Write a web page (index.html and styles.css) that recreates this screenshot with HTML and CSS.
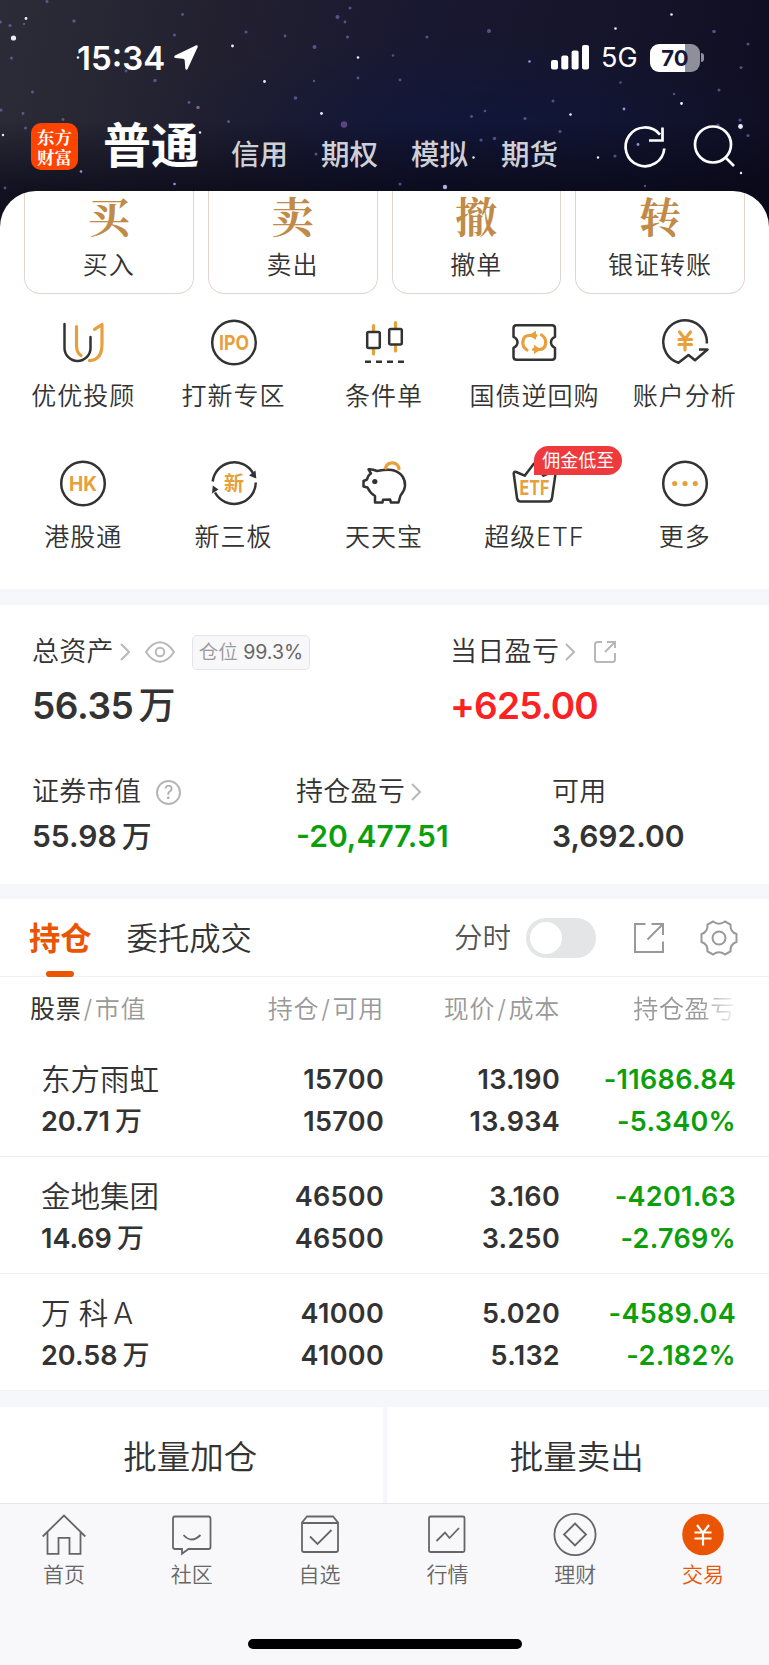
FILE: index.html
```html
<!DOCTYPE html>
<html lang="zh-CN">
<head>
  <meta charset="UTF-8" />
  <meta name="viewport" content="width=device-width, initial-scale=1.0"/>
  <title>东方财富 - 交易</title>
  <link rel="stylesheet" href="styles.css">
</head>
<body>
  <header class="top">
    <svg class="stars" viewBox="0 0 769 240" fill="#7d78c8">
      <g fill="#e8ecff">
        <circle cx="13.5" cy="38" r="2.6"/><circle cx="26" cy="18.5" r="1.4"/><circle cx="3" cy="135" r="1.2"/>
        <circle cx="78" cy="57.5" r="1.3"/><circle cx="232.5" cy="46" r="1.4"/><circle cx="264.5" cy="81.5" r="1.4"/>
        <circle cx="358" cy="57.5" r="1.3"/><circle cx="321.5" cy="113.5" r="1.4"/><circle cx="200" cy="132.5" r="1.2"/>
        <circle cx="671.5" cy="14.5" r="1.3"/><circle cx="615.5" cy="28.5" r="1.3"/><circle cx="681.5" cy="103.5" r="1.4"/>
        <circle cx="740.5" cy="126.5" r="2.4"/><circle cx="598" cy="157.5" r="1.2"/><circle cx="473.5" cy="157.5" r="1.2"/>
        <circle cx="741" cy="173" r="1.2"/><circle cx="445" cy="187" r="2.2" fill="#a9b4dd"/><circle cx="570.5" cy="114.5" r="1.3"/>
      </g>
      <g fill="#8f95dd">
        <circle cx="81" cy="171.5" r="1.3"/><circle cx="174.5" cy="184" r="1.3"/><circle cx="529.5" cy="61.5" r="1.3"/>
        <circle cx="624" cy="109" r="1.4"/><circle cx="638" cy="144.5" r="1.4"/><circle cx="518" cy="148" r="2"/>
        <circle cx="276" cy="153" r="2"/>
      </g>
      <g opacity=".6">
        <circle cx="74" cy="21" r="1.7"/><circle cx="10" cy="25.5" r="1.6"/><circle cx="24" cy="24" r="1.2"/>
        <circle cx="0.5" cy="22" r="1.5"/><circle cx="47" cy="1.5" r="1.5"/><circle cx="11.5" cy="58" r="1.5"/>
        <circle cx="174.5" cy="35" r="1.5"/><circle cx="182.5" cy="14.5" r="1.4"/><circle cx="246" cy="32" r="1.5"/>
        <circle cx="285" cy="36" r="1.4"/><circle cx="314.5" cy="47" r="2"/><circle cx="337.5" cy="17" r="2"/>
        <circle cx="345" cy="22" r="1.4"/><circle cx="347.5" cy="37" r="1.5"/><circle cx="350" cy="8" r="1.5"/>
        <circle cx="155" cy="80.5" r="1.7"/><circle cx="126" cy="71" r="1.4"/><circle cx="32.5" cy="92" r="1.5"/>
        <circle cx="295.5" cy="98" r="1.8"/><circle cx="314" cy="81" r="1.2"/><circle cx="358" cy="78" r="1.4"/>
        <circle cx="189" cy="102.5" r="1.4"/><circle cx="198" cy="107.5" r="1.8" fill="#b48ac4"/><circle cx="344" cy="124.5" r="3.2" fill="#8b62b8"/>
        <circle cx="228.5" cy="121.5" r="1.5"/><circle cx="1" cy="110" r="1.5"/><circle cx="23" cy="113.5" r="1.4"/>
        <circle cx="63" cy="119.5" r="1.4"/><circle cx="25.5" cy="128" r="1.5"/><circle cx="316" cy="154" r="1.5"/>
        <circle cx="489" cy="31" r="2"/><circle cx="427" cy="37" r="1.5"/><circle cx="714" cy="31.5" r="1.8"/>
        <circle cx="748" cy="44" r="1.5"/><circle cx="741" cy="67.5" r="1.5"/><circle cx="719" cy="90" r="1.5"/>
        <circle cx="674" cy="94" r="1.2"/><circle cx="553" cy="101" r="1.5"/><circle cx="560" cy="131.5" r="1.6"/>
        <circle cx="525" cy="118.5" r="1.6"/><circle cx="485" cy="111" r="1.3"/><circle cx="471.5" cy="116.5" r="1.4"/>
        <circle cx="481" cy="140" r="1.6"/><circle cx="494.5" cy="138.5" r="1.7"/><circle cx="740" cy="120" r="1.6"/>
        <circle cx="748" cy="135.5" r="1.6"/><circle cx="718" cy="125" r="1.6"/><circle cx="615" cy="156" r="1.6"/>
        <circle cx="400" cy="80" r="1.4"/><circle cx="620.5" cy="82.5" r="1.3"/><circle cx="400" cy="184" r="1.5"/>
        <circle cx="645" cy="186" r="1.2"/><circle cx="5" cy="188" r="1.4"/><circle cx="393" cy="55.5" r="1.2"/>
      </g>
    </svg>

    <div class="status">
      <span class="time">15:34</span>
      <svg class="locate" width="27" height="27" viewBox="0 0 27 27"><path d="M24.3 1.3 3 11.5q-2 1.6.5 2.6l7.5.7q1.6.2 1.7 1.8l.6 8q.8 2.2 2.3.3L25.700 3q.4-2.200-1.400-1.700z" fill="#fff"/></svg>
      <svg class="signal" width="38" height="25" viewBox="0 0 38 25" fill="#fff">
        <rect x="0" y="15" width="7" height="9.5" rx="2"/><rect x="10.3" y="10.5" width="7" height="14" rx="2"/>
        <rect x="20.6" y="5.5" width="7" height="19" rx="2"/><rect x="31" y="0" width="7" height="24.5" rx="2"/>
      </svg>
      <span class="net">5G</span>
      <span class="battery">70</span>
      <span class="battery-tip"></span>
    </div>

    <nav class="nav">
      <div class="logo">东方<br>财富</div>
      <a class="nav-on">普通</a>
      <a>信用</a>
      <a>期权</a>
      <a>模拟</a>
      <a>期货</a>
      <svg class="nav-refresh" width="46" height="46" viewBox="0 0 46 46" fill="none" stroke="#fff" stroke-width="2.7"><path d="M42.3 24.5A19.4 19.4 0 1 1 38 10.6"/><path d="M40.5 3.5v13H27"/></svg>
      <svg class="nav-search" width="46" height="46" viewBox="0 0 46 46" fill="none" stroke="#fff" stroke-width="2.7"><circle cx="22" cy="20.5" r="18"/><path d="m34.5 33.5 8.5 8.5"/></svg>
    </nav>
  </header>

  <section class="panel">
    <div class="cards">
      <div class="card"><b>买</b><span>买入</span></div>
      <div class="card"><b>卖</b><span>卖出</span></div>
      <div class="card"><b>撤</b><span>撤单</span></div>
      <div class="card"><b>转</b><span>银证转账</span></div>
    </div>

    <div class="menu">
      <div class="item">
        <svg class="ico" viewBox="0 0 48 48"><path d="M5.5 6v24a13 13 0 0 0 26 0V19"/><path class="or" d="M17.5 8.5V27q0 8 4.5 10.5M35.5 11.3 43 6.5V26q0 16-12.5 16.7"/></svg>
        <span>优优投顾</span>
      </div>
      <div class="item">
        <svg class="ico" viewBox="0 0 48 48"><circle cx="24" cy="24.5" r="21.8"/><text x="24" y="31.8" font-size="20" textLength="30" lengthAdjust="spacingAndGlyphs">IPO</text></svg>
        <span>打新专区</span>
      </div>
      <div class="item">
        <svg class="ico" viewBox="0 0 48 48"><path class="or" d="M13.5 7.5v6m0 17v5.5M35.5 4.5V10m0 17v6"/><rect x="7.2" y="14" width="12.6" height="16" rx="1.5"/><rect x="29.2" y="11" width="12.6" height="15.6" rx="1.5"/><path class="flat" stroke-dasharray="6 5" d="M5 43.7h39"/></svg>
        <span>条件单</span>
      </div>
      <div class="item">
        <svg class="ico" viewBox="0 0 48 48"><path d="M6.5 7.3h35.5q3 0 3 3v8.5q-4 1.700-4 5.500t4 5.500v9q0 3-3 3H6.500q-3 0-3-3v-9q4-1.700 4-5.500t-4-5.500v-8.500q0-3 3-3z"/><path class="or" d="M17 32c-6.500-4-5-14.500 2-14.500h7M31.500 17c6.500 4 5 14.500-2 14.500h-6"/><path class="orf" d="m18.500 17.500 7.500-4.800v9zM31 31.500l-7-4.800v9.300z"/></svg>
        <span>国债逆回购</span>
      </div>
      <div class="item">
        <svg class="ico" viewBox="0 0 48 48"><path class="flat" d="M45.8 25.5A21.8 21.8 0 1 0 17.5 44.8l10-7.800 6.500 5.300L46.500 31.500h-8.500"/><path class="or" d="m18.500 14 5.500 7 5.500-7M24 21v11M18 21.500h12.500M18 26.500h12.500"/></svg>
        <span>账户分析</span>
      </div>
      <div class="item">
        <svg class="ico" viewBox="0 0 48 48"><circle cx="24" cy="24.5" r="21.8"/><text x="24" y="31.5" font-size="20" textLength="28" lengthAdjust="spacingAndGlyphs">HK</text></svg>
        <span>港股通</span>
      </div>
      <div class="item">
        <svg class="ico" viewBox="0 0 48 48"><path class="flat" d="M2.7 22.5A21.7 21.7 0 0 1 43 14M45.8 23.5A21.7 21.7 0 0 1 5 33.5"/><path class="drk" d="m39 16.5 6.500-5 .8 8zM8.500 30.500l-6.500 4 .8-8z"/><text x="24" y="31.5" font-size="20">新</text></svg>
        <span>新三板</span>
      </div>
      <div class="item">
        <svg class="ico" viewBox="0 0 48 48"><path d="M17 12q12-2 17-.5c8 2.500 11.500 9 11 15.500q-.5 5-4.500 9.500L38.500 43.500h-7.500L30 40.500l-7 .3-.5 2.700H15V37q-5-3-7.500-8.500L3.500 27.500v-5.500L7 20.500q1-4.500 4-6L8.500 10.300q4-.3 8.500 1.700z"/><circle class="drk" cx="14.8" cy="22.5" r="2.6"/><path class="or" d="M25.5 9q1.5-5.500 7.500-5.200 5 .5 6 6"/></svg>
        <span>天天宝</span>
      </div>
      <div class="item">
        <svg class="ico" viewBox="0 0 48 48"><path d="M3.7 14.5q.3-2.500 2.500-1.500l8.500 3.700L24 4.500l9.500 12.200 9.500-4q2.800-.8 2.500 2L42 39q-.5 3.500-3.500 3.500H10.500q-3 0-3.500-3.500z"/><text x="24.5" y="35.5" font-size="19.5" textLength="30" lengthAdjust="spacingAndGlyphs">ETF</text></svg>
        <i class="tip">佣金低至</i>
        <span>超级ETF</span>
      </div>
      <div class="item">
        <svg class="ico" viewBox="0 0 48 48"><circle cx="24" cy="24.5" r="21.8"/><g class="orf"><circle cx="13.7" cy="24.5" r="2.6"/><circle cx="24" cy="24.5" r="2.6"/><circle cx="34.3" cy="24.5" r="2.6"/></g></svg>
        <span>更多</span>
      </div>
    </div>
  </section>

  <section class="assets">
    <div class="row row-main">
      <div class="cell">
        <div class="label">总资产
          <svg class="chev" viewBox="0 0 10 18"><path d="m1 1 8 8-8 8"/></svg>
          <svg class="eye" viewBox="0 0 30 22"><path d="M1 11Q7.5 1.3 15 1.3T29 11Q22.5 20.7 15 20.7T1 11z"/><circle cx="15" cy="11" r="4.3"/></svg>
          <span class="pos">仓位 <em>99.3%</em></span>
        </div>
        <div class="value">56.35<span class="wan">万</span></div>
      </div>
      <div class="cell">
        <div class="label">当日盈亏
          <svg class="chev" viewBox="0 0 10 18"><path d="m1 1 8 8-8 8"/></svg>
          <svg class="share-sm" viewBox="0 0 24 24"><path d="M9 2H4.5Q2 2 2 4.5v15Q2 22 4.5 22h15q2.5 0 2.5-2.5V13M14 2h8v6M22 2 12 12"/></svg>
        </div>
        <div class="value up">+625.00</div>
      </div>
    </div>
    <div class="row row-sub">
      <div class="cell">
        <div class="label">证券市值 <span class="help">?</span></div>
        <div class="value">55.98<span class="wan">万</span></div>
      </div>
      <div class="cell">
        <div class="label">持仓盈亏
          <svg class="chev" viewBox="0 0 10 18"><path d="m1 1 8 8-8 8"/></svg>
        </div>
        <div class="value down">-20,477.51</div>
      </div>
      <div class="cell">
        <div class="label">可用</div>
        <div class="value">3,692.00</div>
      </div>
    </div>
  </section>

  <section class="hold">
    <div class="tabs">
      <a class="tab tab-on">持仓</a>
      <a class="tab">委托成交</a>
      <span class="fs">分时</span>
      <span class="switch"></span>
      <svg class="share" width="32" height="32" viewBox="0 0 32 32"><path d="M12.5 2H2v28h28V19.5M18.5 2H30v11M30 2 14.5 17.5"/></svg>
      <svg class="gear" width="38" height="38" viewBox="0 0 38 38"><circle cx="19" cy="19" r="6.5"/><path d="M13 2.5q6 4.500 12 0l5.500 3q-.5 7.500 6 9.500v8q-6.500 2-6 9.500l-5.500 3q-6-4.500-12 0l-5.500-3q.5-7.500-6-9.500v-8q6.500-2 6-9.500z"/></svg>
    </div>

    <div class="grid grid-head">
      <div><span class="dark">股票</span><s>/</s>市值</div>
      <div>持仓<s>/</s>可用</div>
      <div>现价<s>/</s>成本</div>
      <div class="fade">持仓盈亏</div>
    </div>

    <div class="grid stock">
      <div><p class="name">东方雨虹</p><p>20.71<span class="wan">万</span></p></div>
      <div><p>15700</p><p>15700</p></div>
      <div><p>13.190</p><p>13.934</p></div>
      <div class="down"><p>-11686.84</p><p>-5.340%</p></div>
    </div>
    <div class="grid stock">
      <div><p class="name">金地集团</p><p>14.69<span class="wan">万</span></p></div>
      <div><p>46500</p><p>46500</p></div>
      <div><p>3.160</p><p>3.250</p></div>
      <div class="down"><p>-4201.63</p><p>-2.769%</p></div>
    </div>
    <div class="grid stock">
      <div><p class="name">万 科<span class="lat">A</span></p><p>20.58<span class="wan">万</span></p></div>
      <div><p>41000</p><p>41000</p></div>
      <div><p>5.020</p><p>5.132</p></div>
      <div class="down"><p>-4589.04</p><p>-2.182%</p></div>
    </div>
  </section>

  <div class="batch">
    <a>批量加仓</a>
    <a>批量卖出</a>
  </div>

  <footer class="tabbar">
    <div class="tabs-row">
      <a><svg viewBox="0 0 44 44"><path d="M.7 23.5 22 2.5l21.3 21M5.5 19.5v21.3h11v-16h11v16h11V19.5"/></svg>首页</a>
      <a><svg viewBox="0 0 44 44"><path d="M5 3.5h33.5q2 0 2 2v28.5q0 2-2 2H18.500L12 40.700V36H5q-2 0-2-2V5.500q0-2 2-2zM13.500 22q8 9 17 0"/></svg>社区</a>
      <a><svg viewBox="0 0 44 44"><path d="M9 3.5h26L40 9.5V37q0 2-2 2H6q-2 0-2-2V9.500zM4 10h36M12 23.500l7.500 7.500 14-14"/></svg>自选</a>
      <a><svg viewBox="0 0 44 44"><rect x="4" y="3.5" width="35.5" height="35.5" rx="1.5"/><path d="m11.500 28 8.500-8.500 4.500 5.500 9.500-10"/></svg>行情</a>
      <a><svg viewBox="0 0 44 44"><circle cx="22" cy="21.5" r="20.6"/><path d="M22 10.5l11 11-11 11-11-11z"/></svg>理财</a>
      <a class="on"><svg viewBox="0 0 44 44"><circle class="disc" cx="22" cy="21.5" r="20.8"/><path class="yen" d="m16 12 6 8 6-8M22 20v12.500M13.500 19.500h17M13.500 25.500h17"/></svg>交易</a>
    </div>
    <div class="home-bar"></div>
  </footer>
</body>
</html>
```
FILE: styles.css
```css
* {
  box-sizing: border-box;
}
body {
  margin: 0;
  width: 769px;
  height: 1665px;
  overflow: hidden;
  background: #fff;
  color: #333;
  font-family: Inter, "Noto Sans CJK SC", sans-serif;
  font-size: 25px;
  font-weight: 350;
}
p {
  margin: 0;
}
svg {
  flex: none;
}
em, i {
  font-style: normal;
}

/* 顶部星空 */
.top {
  position: relative;
  height: 240px;
  background:
    linear-gradient(180deg, rgba(8,8,24,0) 50%, rgba(8,8,24,.75) 80%),
    radial-gradient(ellipse 340px 90px at 480px 125px, rgba(12,22,64,.6), rgba(12,22,64,0)),
    linear-gradient(100deg, #2c2c38 0%, #22202f 28%, #191831 52%, #15142a 78%, #0f0d20 100%);
}
.stars {
  position: absolute;
  left: 0;
  top: 0;
  width: 769px;
  height: 240px;
}
.status {
  position: relative;
  display: flex;
  align-items: center;
  height: 114px;
  padding: 1px 65px 0 77px;
  color: #fff;
}
.time {
  width: 95px;
  font-size: 33px;
  font-weight: 600;
}
.signal {
  margin-left: auto;
}
.net {
  margin-left: 12px;
  width: 38px;
  font-size: 27px;
  font-weight: 400;
}
.battery {
  margin-left: 11px;
  width: 50px;
  height: 28px;
  border-radius: 9px;
  background: linear-gradient(90deg, #fff 70%, #8f8f9c 70%);
  color: #14163a;
  font-size: 22px;
  font-weight: 700;
  line-height: 28px;
  text-align: center;
}
.battery-tip {
  margin-left: 1px;
  width: 3px;
  height: 9px;
  border-radius: 0 3px 3px 0;
  background: #8f8f9c;
}

.nav {
  position: relative;
  display: flex;
  height: 77px;
  padding-left: 31px;
  color: #cfd0d6;
  font-size: 28.5px;
  font-weight: 500;
}
.nav a {
  margin-right: 33px;
  padding-top: 20px;
  line-height: 42px;
}
.nav .nav-on {
  margin: 0 32px 0 25px;
  padding-top: 2px;
  color: #fff;
  font-size: 48px;
  font-weight: 700;
  line-height: 60px;
}
.logo {
  margin-top: 9px;
  padding-top: 4px;
  width: 47px;
  height: 47px;
  border-radius: 10px;
  background: #ff4400;
  color: #fff;
  font-family: "Noto Serif CJK SC", "Noto Sans CJK SC", serif;
  font-size: 17.5px;
  font-weight: 700;
  line-height: 19.5px;
  text-align: center;
}
.nav-refresh {
  margin: 10px 0 0 31px;
}
.nav-search {
  margin: 10px 0 0 23px;
}

/* 白色面板 */
.panel {
  position: relative;
  margin-top: -49px;
  height: 398px;
  border-radius: 36px 36px 0 0;
  background: #fff;
  overflow: hidden;
}
.cards {
  display: grid;
  grid-template-columns: repeat(4, 1fr);
  gap: 14px;
  padding: 0 24px;
}
.card {
  display: flex;
  flex-direction: column;
  align-items: center;
  height: 103px;
  border: 1.5px solid #e2d5d1;
  border-top: 0;
  border-radius: 0 0 16px 16px;
}
.card b {
  height: 59px;
  color: #c08b48;
  font-family: "Noto Serif CJK SC", "Noto Sans CJK SC", serif;
  font-size: 42px;
  font-weight: 700;
  line-height: 49px;
}
.card span, .item span {
  line-height: 30px;
  letter-spacing: 1px;
  white-space: nowrap;
}
.menu {
  display: grid;
  grid-template-columns: repeat(5, 1fr);
  grid-auto-rows: 141px;
  padding: 24px 9px 0 8px;
}
.item {
  position: relative;
  display: flex;
  flex-direction: column;
  align-items: center;
}
.ico {
  margin-bottom: 15px;
  width: 48px;
  height: 48px;
  fill: none;
  stroke: #333;
  stroke-width: 2.5;
  stroke-linecap: round;
  stroke-linejoin: round;
}
.ico .or {
  stroke: #e8a03c;
  stroke-width: 3.2;
}
.ico .orf {
  fill: #e8a03c;
  stroke: none;
}
.ico .drk {
  fill: #333;
  stroke: none;
}
.ico .flat {
  stroke-linecap: butt;
}
.ico text {
  fill: #e8a03c;
  stroke: none;
  font-weight: 700;
  text-anchor: middle;
}
.tip {
  position: absolute;
  left: 75px;
  top: -13px;
  width: 88px;
  height: 29px;
  border-radius: 15px 15px 15px 0;
  background: #ee3a3c;
  color: #fff;
  font-size: 18px;
  font-weight: 400;
  line-height: 29px;
  text-align: center;
}

/* 资产 */
.assets {
  height: 310px;
  border-top: 16px solid #f6f7fa;
  border-bottom: 15px solid #f6f7fa;
  font-size: 27px;
}
.row {
  display: flex;
  padding-left: 32px;
}
.cell {
  flex: none;
}
.row-main {
  padding-top: 26px;
  height: 166px;
}
.label {
  display: flex;
  align-items: center;
  height: 42px;
  letter-spacing: 0.3px;
  line-height: 38px;
  white-space: nowrap;
}
.row-main .cell {
  width: 418px;
}
.row-main .cell:nth-child(2) {
  width: 300px;
}
.row-main .value {
  margin-top: 9px;
  font-size: 37px;
  font-weight: 600;
  letter-spacing: -0.4px;
  line-height: 48px;
}
.row-main .up {
  letter-spacing: -0.8px;
}
.row-sub .cell {
  width: 264px;
}
.row-sub .cell:nth-child(2) {
  width: 256px;
}
.row-sub .cell:nth-child(3) {
  width: 200px;
}
.row-sub .value {
  margin-top: 3px;
  font-size: 30px;
  font-weight: 600;
  line-height: 40px;
}
.wan {
  margin-left: 5px;
  font-weight: 500;
}
.up {
  color: #fa2222;
}
.down {
  color: #0ba00b;
}
.label svg {
  fill: none;
  stroke: #b8b8b8;
  stroke-width: 2;
}
.chev {
  margin-left: 6px;
  width: 10px;
  height: 18px;
}
.eye {
  margin-left: 15px;
  width: 30px;
  height: 22px;
}
.share-sm {
  margin-left: 18px;
  width: 24px;
  height: 24px;
}
.pos {
  margin-left: 17px;
  width: 118px;
  height: 35px;
  border: 1.5px solid #e4e5e8;
  border-radius: 5px;
  background: #f8f8fa;
  color: #999;
  font-size: 19.5px;
  letter-spacing: 0;
  line-height: 33px;
  text-align: center;
}
.pos em {
  color: #666;
  font-weight: 400;
}
.help {
  margin-left: 15px;
  width: 25px;
  height: 25px;
  border: 2px solid #b5b5b5;
  border-radius: 50%;
  color: #aaa;
  font-size: 18px;
  font-weight: 400;
  letter-spacing: 0;
  line-height: 21px;
  text-align: center;
}

/* 持仓 */
.tabs {
  display: flex;
  align-items: center;
  height: 78px;
  padding-left: 29px;
  border-bottom: 1.5px solid #f0f0f1;
  font-size: 31.3px;
  line-height: 44px;
}
.tab {
  position: relative;
  top: 1px;
  margin-right: 35px;
  white-space: nowrap;
}
.tab-on {
  color: #ea5504;
  font-weight: 600;
}
.tab-on::after {
  content: "";
  position: absolute;
  left: 17px;
  bottom: -16px;
  width: 28px;
  height: 6px;
  border-radius: 3px;
  background: #ea5504;
}
.fs {
  margin-left: auto;
  color: #555;
  font-size: 28.5px;
}
.switch {
  margin-left: 15px;
  width: 70px;
  height: 40px;
  padding: 4px;
  border-radius: 20px;
  background: #e4e5e7;
}
.switch::after {
  content: "";
  display: block;
  width: 32px;
  height: 32px;
  border-radius: 50%;
  background: #fff;
}
.share, .gear {
  fill: none;
  stroke: #999;
  stroke-width: 2;
}
.share {
  margin-left: 37px;
}
.gear {
  margin: 0 31px 0 35px;
}
.grid {
  display: grid;
  grid-template-columns: 183px 171px 176px 176px;
  padding-left: 30px;
  text-align: right;
}
.grid > :first-child {
  text-align: left;
}
.grid-head {
  height: 63px;
  color: #999;
  line-height: 64px;
  letter-spacing: 0.7px;
}
.grid-head s {
  margin: 0 2px;
  text-decoration: none;
}
.dark {
  color: #333;
  font-weight: 400;
}
.fade {
  -webkit-mask-image: linear-gradient(90deg, #000 80%, transparent 102%);
  mask-image: linear-gradient(90deg, #000 80%, transparent 102%);
}
.stock {
  height: 117px;
  padding-top: 19px;
  border-bottom: 1.5px solid #f0f0f1;
  font-size: 27px;
  font-weight: 600;
  letter-spacing: 0.3px;
  line-height: 42px;
}
.stock > :first-child {
  padding-left: 11px;
  letter-spacing: 0;
  white-space: nowrap;
}
.stock p {
  height: 42px;
}
.stock .name {
  font-size: 29.5px;
  font-weight: 350;
  line-height: 40px;
}
.lat {
  margin-left: 5px;
}

.batch {
  display: flex;
  gap: 4px;
  height: 112px;
  padding-top: 16px;
  background: #f6f7fa;
  font-size: 33.5px;
}
.batch a {
  flex: 1;
  padding-right: 2px;
  background: #fff;
  line-height: 100px;
  text-align: center;
}

/* 底部导航 */
.tabbar {
  height: 163px;
  border-top: 1.5px solid #e6e6e8;
  background: #f8f8fa;
}
.tabs-row {
  display: flex;
  height: 135px;
  padding: 9px 2px 0 0;
  color: #666;
  font-size: 21px;
}
.tabs-row a {
  display: flex;
  flex: 1;
  flex-direction: column;
  align-items: center;
  line-height: 35px;
}
.tabs-row svg {
  width: 44px;
  height: 44px;
  fill: none;
  stroke: #666;
  stroke-width: 1.8;
}
.tabs-row .on {
  color: #ea5504;
}
.tabs-row .disc {
  fill: #ea5504;
  stroke: none;
}
.tabs-row .yen {
  stroke: #fff;
  stroke-width: 2.2;
}
.home-bar {
  margin: 0 auto;
  width: 274px;
  height: 10px;
  border-radius: 5px;
  background: #000;
}
```
